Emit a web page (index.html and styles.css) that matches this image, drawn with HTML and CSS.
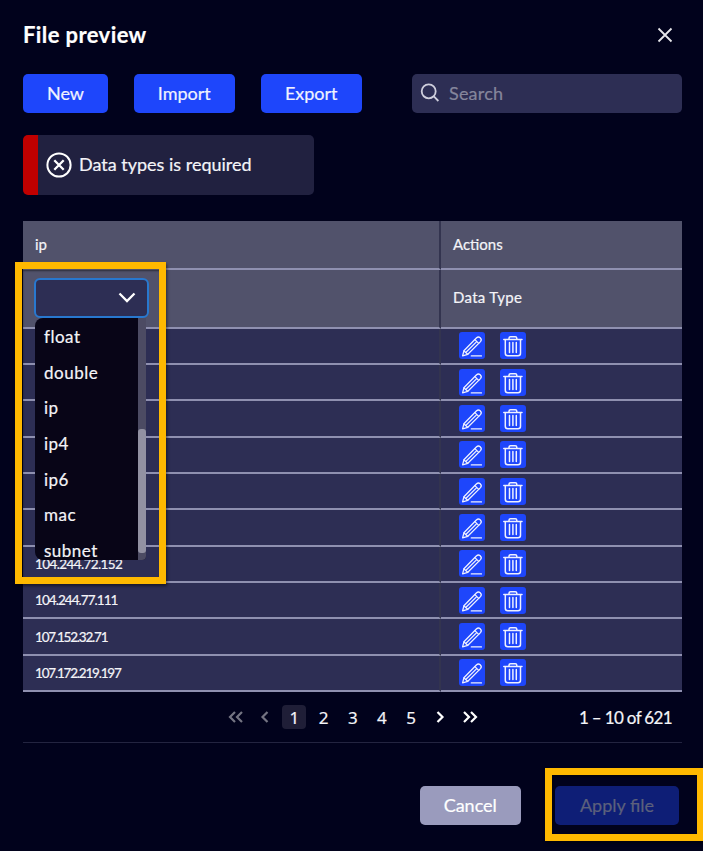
FILE: index.html
```html
<!DOCTYPE html>
<html lang="en">
<head>
<meta charset="utf-8">
<title>File preview</title>
<link rel="stylesheet" href="styles.css">
</head>
<body>
<svg class="defs" width="0" height="0">
  <symbol id="edit" viewBox="0 0 26 27"><g fill="none" stroke="#eef0ff" stroke-width="1.300" stroke-linejoin="round" stroke-linecap="round"><path d="M3.600 23.800 4.900 18.800 17.600 5.800Q19.300 4.200 21.200 5.700 23.200 7.500 21.500 9.600L8.800 22.300Z"/><path d="M15.900 7.600 19.700 11.400M17.700 9.600 7 20.300M5 18.900 8.700 22.200M12.300 23.900H22.500"/></g></symbol>
  <symbol id="trash" viewBox="0 0 26 27"><g fill="none" stroke="#eef0ff" stroke-width="1.500" stroke-linejoin="round" stroke-linecap="round"><path d="M3.800 7.500H22M9 7.200V6.200Q9 4.800 10.500 4.800H15.300Q16.800 4.800 16.800 6.200V7.200M5.300 8V21.200Q5.300 23.700 7.800 23.700H18Q20.500 23.700 20.500 21.200V8M9.500 10.600V20.500M12.900 10.600V20.500M16.300 10.600V20.500"/></g></symbol>
</svg>
<main class="dialog">
  <header class="head">
    <h1>File preview</h1>
    <svg class="close" viewBox="0 0 16 16"><path d="M1.500 1.500 14.500 14.500M14.500 1.500 1.500 14.500" fill="none" stroke="#e6e6ea" stroke-width="1.8"/></svg>
  </header>
  <div class="toolbar">
    <button class="btn new">New</button>
    <button class="btn">Import</button>
    <button class="btn">Export</button>
    <div class="search">
      <svg viewBox="0 0 20 20"><g fill="none" stroke="#cfcfdd" stroke-width="1.8"><circle cx="8.700" cy="8.300" r="7"/><path d="M13.600 13.200 18.400 18"/></g></svg>
      <span>Search</span>
    </div>
  </div>
  <div class="alert">
    <svg viewBox="0 0 26 26"><g fill="none" stroke="#fff" stroke-width="2"><circle cx="13" cy="13" r="11.600"/><path d="M8.300 8.300 17.700 17.700M17.700 8.300 8.300 17.700" stroke-width="2.300"/></g></svg>
    <span>Data types is required</span>
  </div>
  <section class="table">
    <div class="row top"><div class="cell">ip</div><div class="cell">Actions</div></div>
    <div class="row types">
      <div class="cell">
        <div class="select">
          <svg viewBox="0 0 18 12"><path d="M1.500 1.500 9 9 16.500 1.500" fill="none" stroke="#fff" stroke-width="2.300"/></svg>
          <div class="menu">
            <ul><li>float</li><li>double</li><li>ip</li><li>ip4</li><li>ip6</li><li>mac</li><li>subnet</li></ul>
            <div class="track"><div class="thumb"></div></div>
          </div>
        </div>
      </div>
      <div class="cell type-label">Data Type</div>
    </div>
    <div class="body">
      <div class="row"><div class="cell"></div><div class="cell acts"><svg class="act"><use href="#edit"/></svg><svg class="act"><use href="#trash"/></svg></div></div>
      <div class="row"><div class="cell"></div><div class="cell acts"><svg class="act"><use href="#edit"/></svg><svg class="act"><use href="#trash"/></svg></div></div>
      <div class="row"><div class="cell"></div><div class="cell acts"><svg class="act"><use href="#edit"/></svg><svg class="act"><use href="#trash"/></svg></div></div>
      <div class="row"><div class="cell"></div><div class="cell acts"><svg class="act"><use href="#edit"/></svg><svg class="act"><use href="#trash"/></svg></div></div>
      <div class="row"><div class="cell"></div><div class="cell acts"><svg class="act"><use href="#edit"/></svg><svg class="act"><use href="#trash"/></svg></div></div>
      <div class="row"><div class="cell"></div><div class="cell acts"><svg class="act"><use href="#edit"/></svg><svg class="act"><use href="#trash"/></svg></div></div>
      <div class="row"><div class="cell"><span class="addr">104.244.72.152</span></div><div class="cell acts"><svg class="act"><use href="#edit"/></svg><svg class="act"><use href="#trash"/></svg></div></div>
      <div class="row"><div class="cell"><span class="addr snug">104.244.77.111</span></div><div class="cell acts"><svg class="act"><use href="#edit"/></svg><svg class="act"><use href="#trash"/></svg></div></div>
      <div class="row"><div class="cell"><span class="addr tight">107.152.32.71</span></div><div class="cell acts"><svg class="act"><use href="#edit"/></svg><svg class="act"><use href="#trash"/></svg></div></div>
      <div class="row"><div class="cell"><span class="addr tight">107.172.219.197</span></div><div class="cell acts"><svg class="act"><use href="#edit"/></svg><svg class="act"><use href="#trash"/></svg></div></div>
    </div>
  </section>
  <nav class="pager">
    <div class="pages">
      <span class="off"><svg viewBox="0 0 16 12"><path d="M7 1 2 6 7 11M14 1 9 6 14 11"/></svg></span>
      <span class="off"><svg viewBox="0 0 16 12"><path d="M10.500 1 5.500 6 10.500 11"/></svg></span>
      <span class="current">1</span><span>2</span><span>3</span><span>4</span><span>5</span>
      <span><svg viewBox="0 0 16 12"><path d="M5.500 1 10.500 6 5.500 11"/></svg></span>
      <span><svg viewBox="0 0 16 12"><path d="M2 1 7 6 2 11M9 1 14 6 9 11"/></svg></span>
    </div>
    <span class="range">1 – 10 of 621</span>
  </nav>
  <footer class="foot">
    <button class="btn cancel">Cancel</button>
    <button class="btn apply">Apply file</button>
  </footer>
</main>
<div class="mark mark-menu"></div>
<div class="mark mark-apply"></div>
</body>
</html>
```
FILE: styles.css
```css
* { box-sizing: border-box; }
body { margin: 0; background: #01021c; color: #f4f4f8; font-family: Lato, "Open Sans", sans-serif; overflow: hidden; -webkit-text-stroke: .2px currentColor; }
.defs { position: absolute; }
.dialog { width: 703px; height: 851px; padding: 0 21px 0 23px; display: flex; flex-direction: column; }
.head { height: 74px; display: flex; align-items: center; justify-content: space-between; padding: 0 9px 4px 0; }
h1 { margin: 0; font-size: 22px; line-height: 28px; font-weight: 700; letter-spacing: .4px; color: #fff; }
.close { width: 16px; height: 16px; }
.toolbar { height: 39px; display: flex; }
.btn { width: 101.500px; height: 39px; margin: 0 25.500px 0 0; padding: 0 0 1px; border: 0; border-radius: 5px; background: #1e46fb; color: #f0f2ff; font: 18px Lato, sans-serif; -webkit-text-stroke: .2px currentColor; }
.btn.new { width: 85px; }
.search { width: 270px; margin-left: auto; display: flex; align-items: center; gap: 9px; padding: 0 0 1px 8px; border-radius: 5px; background: #2d2e54; color: #85869c; font-size: 18px; letter-spacing: .2px; }
.search svg { width: 20px; height: 20px; }
.alert { width: 291px; height: 60px; margin-top: 22px; border-left: 15px solid #c00000; border-radius: 5px; background: #212140; display: flex; align-items: center; padding-left: 8px; gap: 7px; font-size: 18px; }
.alert svg { width: 26px; height: 26px; }
.alert span { padding-bottom: 3px; }
.table { margin-top: 26px; }
.row { display: grid; grid-template-columns: 418px 241px; }
.cell { border-bottom: 2px solid #8f90b0; padding: 0 12px; display: flex; align-items: center; font-size: 15px; background: #2d2e54; min-width: 0; }
.cell:first-child { border-right: 2px solid #33344f; }
.top .cell, .types .cell { background: #51526b; }
.top .cell { padding-bottom: 1px; }
.top { height: 48.500px; }
.types { height: 59px; }
.types .cell:first-child { padding-left: 11px; }
.type-label { padding-bottom: 2px; letter-spacing: .3px; }
.body { height: 363.600px; display: grid; grid-template-rows: repeat(10, 1fr); }
.body .row { min-height: 0; }
.acts { padding: 0 0 0 18px; gap: 15px; }
.act { width: 26px; height: 27px; border-radius: 3px; background: #1e46fb; }
.addr { font-size: 13.500px; letter-spacing: -.6px; }
.snug { letter-spacing: -.950px; }
.tight { letter-spacing: -1.200px; }
.select { position: relative; width: 115px; height: 40px; border: 2px solid #2878cf; border-radius: 6px; background: #2d2e54; display: flex; align-items: center; justify-content: flex-end; padding-right: 11px; }
.select svg { width: 18px; height: 12px; }
.menu { position: absolute; z-index: 2; top: 38px; left: -1px; width: 111px; height: 242px; display: flex; background: #080517; border-radius: 8px 0 4px 8px; overflow: hidden; }
.menu ul { list-style: none; margin: 0; padding: 1px 0 0 9px; flex: 1; font-size: 17px; letter-spacing: .5px; }
.menu li { height: 35.700px; line-height: 36px; }
.track { width: 8px; background: #4c4b63; padding-top: 111px; }
.thumb { height: 124px; border-radius: 3px; background: #9291a2; }
.pager { height: 51px; flex: none; display: flex; align-items: center; justify-content: space-between; border-bottom: 1px solid #232440; padding: 0 10px 0 201px; }
.pages { display: flex; gap: 5.200px; font: 17px "Noto Sans", sans-serif; }
.pages span { width: 24px; height: 24px; display: flex; align-items: center; justify-content: center; }
.pages .current { background: #1f1e37; border-radius: 4px; }
.pages svg { width: 16px; height: 12px; fill: none; stroke: #fff; stroke-width: 2.200; }
.off { opacity: .45; }
.range { font-size: 17px; letter-spacing: -.650px; }
.foot { display: flex; justify-content: flex-end; margin-top: 43px; padding-right: 3px; gap: 34px; }
.foot .btn { margin: 0; }
.foot .cancel { background: #9a9bbd; color: #fff; }
.foot .apply { width: 124px; background: #0e1e76; color: #5c607c; }
.mark { position: absolute; border: 7px solid #ffb900; z-index: 5; box-shadow: 1px 2px 3px rgba(0,0,0,.5), inset 1px 2px 2px rgba(0,0,0,.45); }
.mark-menu { left: 15px; top: 262px; width: 151px; height: 322px; }
.mark-apply { left: 545px; top: 768px; width: 159px; height: 73px; }
```
